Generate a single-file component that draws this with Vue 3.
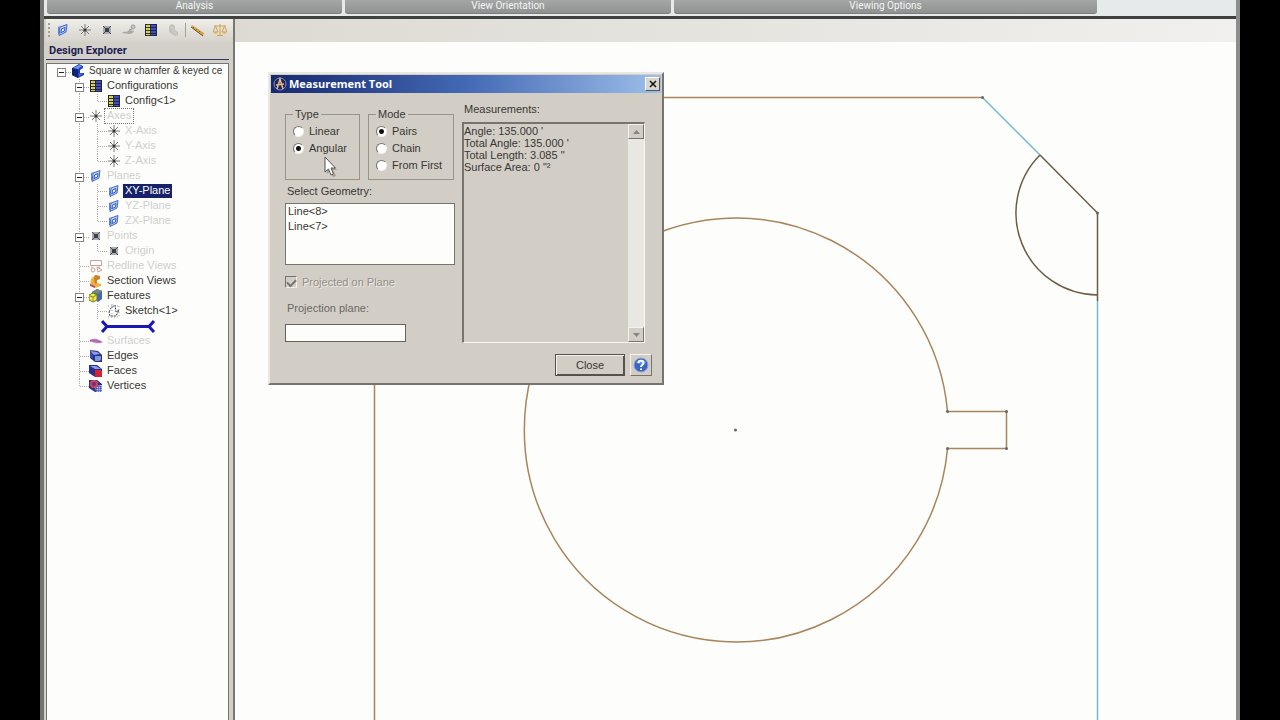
<script setup>
import { ref } from 'vue'

const ribbonGroups = [
  { name: 'Analysis', cls: 'analysis' },
  { name: 'View Orientation', cls: 'orientation' },
  { name: 'Viewing Options', cls: 'options' },
]

const tools = [
  { icon: 'plane', label: 'Insert plane' },
  { icon: 'axis', label: 'Insert axis' },
  { icon: 'point', label: 'Insert point' },
  { icon: 'surface-off', label: 'Surface' },
  { icon: 'config', label: 'Configurations' },
  { icon: 'part-off', label: 'Part' },
]
const measureTools = [
  { icon: 'ruler', label: 'Measurement tool' },
  { icon: 'scales', label: 'Physical properties' },
]

// guides: one entry per indent column; b = expander, v = line, t = tee, l = elbow
const rows = [
  { guides: ['root'], icon: 'part', text: 'Square w chamfer & keyed ce', state: 'document' },
  { guides: ['', 'b'], icon: 'config', text: 'Configurations' },
  { guides: ['', 'v', 'l'], icon: 'config', text: 'Config<1>' },
  { guides: ['', 'b'], icon: 'axis', text: 'Axes', state: 'off focus' },
  { guides: ['', 'v', 't'], icon: 'axis', text: 'X-Axis', state: 'off' },
  { guides: ['', 'v', 't'], icon: 'axis', text: 'Y-Axis', state: 'off' },
  { guides: ['', 'v', 'l'], icon: 'axis', text: 'Z-Axis', state: 'off' },
  { guides: ['', 'b'], icon: 'plane', text: 'Planes', state: 'off' },
  { guides: ['', 'v', 't'], icon: 'plane', text: 'XY-Plane', state: 'selected' },
  { guides: ['', 'v', 't'], icon: 'plane', text: 'YZ-Plane', state: 'off' },
  { guides: ['', 'v', 'l'], icon: 'plane', text: 'ZX-Plane', state: 'off' },
  { guides: ['', 'b'], icon: 'point', text: 'Points', state: 'off' },
  { guides: ['', 'v', 'l'], icon: 'point', text: 'Origin', state: 'off' },
  { guides: ['', 't'], icon: 'redline', text: 'Redline Views', state: 'off' },
  { guides: ['', 't'], icon: 'section', text: 'Section Views' },
  { guides: ['', 'b'], icon: 'features', text: 'Features' },
  { guides: ['', 'v', 't'], icon: 'sketch', text: 'Sketch<1>' },
  { guides: ['', 'v'], bar: true },
  { guides: ['', 't'], icon: 'surface', text: 'Surfaces', state: 'off' },
  { guides: ['', 't'], icon: 'edges', text: 'Edges' },
  { guides: ['', 't'], icon: 'faces', text: 'Faces' },
  { guides: ['', 'l'], icon: 'vertices', text: 'Vertices' },
]

const guidePaths = {
  '': '',
  v: 'M8.5 0V15',
  t: 'M8.5 0V15M9 7.5H18',
  l: 'M8.5 0V8M9 7.5H18',
  b: 'M8.5 0V15M9 8.5H18',
  root: 'M9 8.5H18',
}

const types = ['Linear', 'Angular']
const modes = ['Pairs', 'Chain', 'From First']
const type = ref('Angular')
const mode = ref('Pairs')
const projected = ref(true)
const plane = ref('')
const geometry = ['Line<8>', 'Line<7>']
const results = 'Angle: 135.000 \'\nTotal Angle: 135.000 \'\nTotal Length: 3.085 "\nSurface Area: 0 "²'
</script>

<template>
  <div class="stage">
    <svg class="symbols" aria-hidden="true">
      <symbol id="plane" viewBox="0 0 14 14">
        <path d="M4 4 11 1.500 10 9 3 12.500Z" fill="#b9d2f8" stroke="#4266c8" />
        <path d="M5.500 6 9 4.500 8.500 8 5 9.500Z" fill="#e4eefc" stroke="#3158bd" />
        <path d="M2.500 4V11L5 9.500M2.500 4H4" stroke="#5f83d8" fill="none" />
      </symbol>
      <symbol id="axis" viewBox="0 0 14 14">
        <path d="M1 7H13M7 1V13M3 3 11 11M11 3 3 11" stroke="#7c7c7c" fill="none" />
        <circle cx="7" cy="7" r="1.500" fill="#333" />
      </symbol>
      <symbol id="point" viewBox="0 0 14 14">
        <rect x="3" y="3" width="8" height="8" fill="#a9abb2" />
        <path d="M3 3 11 11M11 3 3 11" stroke="#4c4c54" stroke-width="1" />
        <rect x="5" y="5" width="4" height="4" fill="#3d3d46" />
      </symbol>
      <symbol id="surface-off" viewBox="0 0 14 14">
        <path d="M0 10C3 7 4 11 7 7L12 8C10 13 4 10 0 10Z" fill="#aaa9a3" />
        <circle cx="11" cy="4" r="2" fill="#ccc" stroke="#999" />
        <path d="M7 7 10 6" stroke="#999" />
      </symbol>
      <symbol id="part-off" viewBox="0 0 14 14">
        <path d="M3 3 6 1 9 3V7L12 9V12L9 13 3 9Z" fill="#c2c1bc" />
        <path d="M4 4 7 5V9M8 9 11 11" stroke="#d6d5d0" fill="none" />
      </symbol>
      <symbol id="config" viewBox="0 0 14 14">
        <rect x="1" y="1" width="12" height="12" fill="#24243c" />
        <path d="M2 2H6V4H2ZM2 5H6V7H2ZM2 8H6V10H2ZM2 11H6V12H2Z" fill="#e6e34a" />
        <path d="M7 2H12V4H7ZM7 5H12V7H7ZM7 8H12V10H7ZM7 11H12V12H7Z" fill="#3d50c8" />
        <path d="M4 1V13" stroke="#8a8838" stroke-width="0.500" />
      </symbol>
      <symbol id="ruler" viewBox="0 0 14 14">
        <path d="M1 2 13 10 12 13 0 4Z" fill="#d5a545" />
        <path d="M0 4 12 13" stroke="#6d5525" />
        <path d="M3 4 2 5M6 6 5 7M9 8 8 9" stroke="#83642a" />
      </symbol>
      <symbol id="scales" viewBox="0 0 14 14">
        <path d="M7 1V12M4 12.500H10M1 3H13M2.500 3 0 9H5ZM11.500 3 9 9H14Z" fill="none" stroke="#cfa24c" />
        <path d="M0 9H5L3 11H2ZM9 9H14L12 11H11Z" fill="#dfb65f" />
      </symbol>
      <symbol id="part" viewBox="0 0 14 14">
        <path d="M1 4 8 0 12 2V4L9 6V9L13 9V11L7 14 1 11Z" fill="#1f3fbf" />
        <path d="M1 4 7 6V14L1 11Z" fill="#12246f" />
        <path d="M2 4 8 1 11 2 7 5Z" fill="#6a98f2" />
        <path d="M8 10 12 9 8 12Z" fill="#5687ea" />
      </symbol>
      <symbol id="redline" viewBox="0 0 14 14">
        <path d="M1.500 1.500H12.500V6.500H1.500ZM3 7V9M10 7V9" fill="#fff" stroke="#c9a09c" />
        <circle cx="4" cy="11" r="2" fill="none" stroke="#c9a09c" />
        <path d="M8 8 13 11 9 13Z" fill="none" stroke="#c9a09c" />
      </symbol>
      <symbol id="section" viewBox="0 0 14 14">
        <path d="M2 5 6 1 11 2V5L8 6V9L12 10V12L6 14 1 11Z" fill="#efb33c" />
        <path d="M6 1 11 2V5L8 6V9L6 10 5 5Z" fill="#c88430" />
        <path d="M1 10 6 12V14L1 12Z" fill="#b6498a" />
      </symbol>
      <symbol id="features" viewBox="0 0 14 14">
        <path d="M3 3 8 0 13 2V10L9 13 3 9Z" fill="#4b65b4" />
        <path d="M3 3 8 0 13 2 9 5Z" fill="#6d8c70" />
        <path d="M0 6 4 4 8 6V11L4 13 0 11Z" fill="#eeea46" stroke="#77752c" />
        <path d="M1 7 4 8 8 6M4 8V12" stroke="#8d8a34" fill="none" />
      </symbol>
      <symbol id="sketch" viewBox="0 0 14 14">
        <path d="M2 8 4 4 8 1 9 8 12 6 9 12 3 12Z" fill="none" stroke="#33334c" stroke-dasharray="2 1" />
        <path d="M1 2H13M1 13H13M5 0V14M12 2V13" stroke="#9999a8" stroke-dasharray="1 2" />
      </symbol>
      <symbol id="surface" viewBox="0 0 14 14">
        <path d="M0 7C3 4 6 5 8 5L14 8C11 10 8 9 6 9Z" fill="#c583c6" />
        <path d="M1 7C5 6 8 7 12 8" stroke="#9b5ba4" fill="none" />
      </symbol>
      <symbol id="edges" viewBox="0 0 14 14">
        <path d="M1 1 9 2 13 6V13L6 13 1 9Z" fill="#2a2f86" />
        <path d="M1 2 8 3 11 5 5 6Z" fill="#8c9fe6" />
        <path d="M6 7H12V11L10 12H6Z" fill="#8294dc" />
        <path d="M1 3 4 6V10L1 8Z" fill="#3c4cae" />
      </symbol>
      <symbol id="faces" viewBox="0 0 14 14">
        <path d="M0 1 8 1 13 5V13L6 13 0 9Z" fill="#2a2f86" />
        <path d="M1 2 7 2 12 5H6Z" fill="#8c9fe6" />
        <path d="M6 6H13V13H6Z" fill="#da1f34" />
      </symbol>
      <symbol id="vertices" viewBox="0 0 14 14">
        <path d="M0 1 8 1 13 5V13L6 13 0 9Z" fill="#2e3288" />
        <path d="M6 7 13 6V13H7Z" fill="#b7c0ec" />
        <path d="M7 8H13M7 10H13M7 12H13M8 7V13M10 7V13M12 7V13" stroke="#343b96" stroke-dasharray="1 1" />
        <circle cx="5" cy="5" r="4" fill="#cc4663" />
        <circle cx="5" cy="5" r="2" fill="#722f78" />
      </symbol>
    </svg>

    <div class="window">
      <header class="ribbon">
        <div v-for="g in ribbonGroups" :key="g.name" class="group" :class="g.cls">{{ g.name }}</div>
      </header>

      <div class="work">
        <aside class="explorer">
          <div class="toolbar">
            <span class="grip"></span>
            <button v-for="t in tools" :key="t.label" class="tool" :aria-label="t.label">
              <svg><use :href="'#' + t.icon" /></svg>
            </button>
            <span class="divider"></span>
            <button v-for="t in measureTools" :key="t.label" class="tool" :aria-label="t.label">
              <svg><use :href="'#' + t.icon" /></svg>
            </button>
          </div>
          <h2>Design Explorer</h2>
          <ul class="tree">
            <li v-for="(r, i) in rows" :key="i" class="row">
              <svg v-for="(g, k) in r.guides" :key="k" class="guide">
                <path :d="guidePaths[g]" class="dots" />
                <g v-if="g === 'b' || g === 'root'">
                  <rect x="4.500" y="4.500" width="8" height="8" class="box" />
                  <path d="M6 8.500H11" class="minus" />
                </g>
              </svg>
              <svg v-if="r.bar" class="rollback">
                <path d="M1 2 6 7.500 1 13M6 7.500H48M53 2 48 7.500 53 13" />
              </svg>
              <template v-else>
                <svg class="node"><use :href="'#' + r.icon" /></svg>
                <span class="label" :class="r.state">{{ r.text }}</span>
              </template>
            </li>
          </ul>
        </aside>

        <main class="view">
          <div class="strip"></div>
          <div class="canvas">
            <svg class="drawing">
              <g transform="translate(-235 -42)">
                <g class="edge">
                  <path d="M374.500 1600V97.500H982" />
                  <path d="M947.500 411.500A212 212 0 1 0 947.500 448.500" />
                  <path d="M947.500 411.500H1006.500V448.500H947.500" />
                </g>
                <path class="picked" d="M982.500 97.500 1040 155M1097.500 301V1600" />
                <path class="angle" d="M1040 155 1097.500 213V301M1040 155A82 82 0 0 0 1097.500 295" />
                <g class="vertex">
                  <circle cx="735.500" cy="430" r="1.500" />
                  <circle cx="982.500" cy="97.500" r="1.500" />
                  <circle cx="1097.500" cy="213" r="1.500" />
                  <circle cx="947.500" cy="411.500" r="1.500" />
                  <circle cx="947.500" cy="448.500" r="1.500" />
                  <circle cx="1006.500" cy="411.500" r="1.500" />
                  <circle cx="1006.500" cy="448.500" r="1.500" />
                </g>
              </g>
            </svg>

            <section class="dialog" role="dialog" aria-labelledby="dlg-title">
              <div class="titlebar">
                <svg class="logo" viewBox="0 0 14 14">
                  <circle cx="7" cy="7" r="6" fill="#1d2559" stroke="#8690bd" />
                  <path d="M4 12 7 2 10 12M3 8 11 7" stroke="#e6b98a" fill="none" stroke-width="1.500" />
                </svg>
                <h1 id="dlg-title">Measurement Tool</h1>
                <button class="x" aria-label="Close window">
                  <svg viewBox="0 0 8 8"><path d="M1 1 7 7M7 1 1 7" /></svg>
                </button>
              </div>
              <div class="body">
                <div class="left">
                  <div class="groups">
                    <fieldset class="type">
                      <legend>Type</legend>
                      <label v-for="t in types" :key="t"><input v-model="type" type="radio" name="type" :value="t" />{{ t }}</label>
                    </fieldset>
                    <fieldset class="mode">
                      <legend>Mode</legend>
                      <label v-for="m in modes" :key="m"><input v-model="mode" type="radio" name="mode" :value="m" />{{ m }}</label>
                    </fieldset>
                  </div>
                  <span id="geo" class="caption">Select Geometry:</span>
                  <ul class="geometry" role="listbox" aria-labelledby="geo">
                    <li v-for="g in geometry" :key="g" role="option">{{ g }}</li>
                  </ul>
                  <label class="projected">
                    <input v-model="projected" type="checkbox" disabled />Projected on Plane
                  </label>
                  <label for="plane-name" class="caption dim">Projection plane:</label>
                  <input id="plane-name" v-model="plane" type="text" class="plane" />
                </div>
                <div class="right">
                  <label for="results" class="caption">Measurements:</label>
                  <div class="results">
                    <textarea id="results" readonly :value="results"></textarea>
                    <div class="scroll">
                      <button aria-label="Scroll up"><svg viewBox="0 0 7 4"><path d="M0 4 3.500 0 7 4Z" /></svg></button>
                      <button aria-label="Scroll down"><svg viewBox="0 0 7 4"><path d="M0 0H7L3.500 4Z" /></svg></button>
                    </div>
                  </div>
                </div>
              </div>
              <div class="footer">
                <button class="close">Close</button>
                <button class="help" aria-label="Help">
                  <svg viewBox="0 0 16 16">
                    <circle cx="8" cy="8" r="7" fill="#3a66bd" stroke="#8ba6d8" />
                    <path d="M3 6A5.500 5.500 0 0 1 13 6Q8 8 3 6Z" fill="#6d95dc" />
                    <path d="M5.500 6C5.500 3 10.500 3 10.500 6 10.500 8 8 8 8 10M8 11.500V13" fill="none" stroke="#fff" stroke-width="2" />
                  </svg>
                </button>
              </div>
              <svg class="pointer" viewBox="0 0 14 22">
                <path d="M3 3V18L6 15 9 21 12 20 9 14H13Z" fill="#77736b" opacity="0.500" />
                <path d="M1 1V16L4.500 13 7 19 9.500 18 7 12H11.500Z" fill="#fff" stroke="#555" />
              </svg>
            </section>
          </div>
        </main>
      </div>
    </div>
  </div>
</template>

<style>
body {
  background: #000;
}
</style>

<style scoped>
* {
  box-sizing: border-box;
}
.stage {
  display: flex;
  height: 100vh;
  padding: 0 40px;
  background: #000;
  overflow: hidden;
  font: 11px/13px "Liberation Sans", sans-serif;
  color: #383735;
}
.symbols {
  position: absolute;
  width: 0;
  height: 0;
}
.window {
  flex: 1;
  min-width: 0;
  display: flex;
  flex-direction: column;
  border-left: 4px solid #73736f;
  border-right: 4px solid #8d8d8d;
}
ul, h1, h2 {
  margin: 0;
  padding: 0;
  list-style: none;
}
button {
  font: inherit;
  color: inherit;
  padding: 0;
  border: 0;
  background: none;
  display: flex;
  align-items: center;
  justify-content: center;
}

/* ribbon */
.ribbon {
  display: flex;
  gap: 3px;
  height: 19px;
  padding: 0 2px 2px 3px;
  background: #e6eaea;
  border-bottom: 3px solid #3f4040;
}
.group {
  height: 14px;
  border-radius: 0 0 3px 3px;
  background: linear-gradient(#a4a7a6, #8f9291);
  border-bottom: 1px solid #7b7e7d;
  color: #f4f6f6;
  font: 10px/12px Roboto, sans-serif;
  text-align: center;
}
.analysis { width: 295px; }
.orientation { width: 326px; }
.options { width: 423px; }

.work {
  flex: 1;
  min-height: 0;
  display: flex;
}

/* explorer */
.explorer {
  width: 191px;
  display: flex;
  flex-direction: column;
  background: #d3d0c9;
  padding: 0 4px 0 2px;
  border-right: 2px solid #777773;
}
.toolbar {
  display: flex;
  align-items: center;
  height: 23px;
  margin: 0 -4px 0 0;
  padding: 0 0 2px 2px;
  background: linear-gradient(#efeeea, #d6d3cb);
}
.grip {
  width: 4px;
  height: 14px;
  border-left: 2px dotted #a29f97;
}
.tool {
  width: 22px;
  height: 20px;
}
.tool svg {
  width: 14px;
  height: 14px;
}
.divider {
  width: 1px;
  height: 14px;
  margin: 0 1px;
  background: #a4a19a;
}
h2 {
  height: 18px;
  padding-left: 3px;
  font: bold 11px/17px Roboto, sans-serif;
  color: #1d1d52;
  border-bottom: 1px solid #35356a;
}
.tree {
  flex: 1;
  margin-top: 3px;
  padding-left: 6px;
  background: #fdfefb;
  border: 1px solid #77756f;
  border-bottom: 0;
  overflow: hidden;
}
.row {
  display: flex;
  align-items: center;
  height: 15px;
  white-space: nowrap;
}
.guide {
  flex: none;
  width: 18px;
  height: 15px;
}
.dots {
  fill: none;
  stroke: #aaa;
  stroke-dasharray: 1 1;
}
.box {
  fill: #fff;
  stroke: #858585;
}
.minus {
  stroke: #222;
}
.node {
  flex: none;
  width: 14px;
  height: 14px;
  margin: 0 2px 1px 0;
}
.label {
  height: 14px;
  line-height: 13px;
  margin-bottom: 2px;
  padding: 0 2px;
}
.document {
  font-size: 10px;
}
.off {
  color: #cfcfcf;
}
.focus {
  outline: 1px dotted #777;
}
.selected {
  background: #16216a;
  color: #fff;
}
.rollback {
  width: 55px;
  height: 15px;
  margin-left: 12px;
  fill: none;
  stroke: #1a18b4;
  stroke-width: 3;
}

/* drawing area */
.view {
  flex: 1;
  min-width: 0;
  display: flex;
  flex-direction: column;
}
.strip {
  height: 23px;
  background: linear-gradient(90deg, #dcdad2, #e6e4df 50%, #f2f0ee);
}
.canvas {
  position: relative;
  flex: 1;
  min-height: 0;
  background: #fdfefb;
}
.drawing {
  display: block;
  width: 100%;
  height: 100%;
}
.edge {
  fill: none;
  stroke: #a9845c;
  stroke-width: 1.500;
}
.picked {
  fill: none;
  stroke: #74b8d6;
  stroke-width: 1.500;
}
.angle {
  fill: none;
  stroke: #6b5b45;
  stroke-width: 1.500;
}
.vertex {
  fill: #5f6a68;
}

/* dialog */
.dialog {
  position: absolute;
  left: 33px;
  top: 30px;
  width: 396px;
  padding: 1px 1px 7px;
  background: #d2cec5;
  border: 2px solid;
  border-color: #e9e7e1 #77746f #77746f #e9e7e1;
}
.titlebar {
  display: flex;
  align-items: center;
  height: 18px;
  padding: 0 1px 0 2px;
  background: linear-gradient(90deg, #16296f, #4469b4 50%, #9dbfea);
}
.logo {
  width: 14px;
  height: 14px;
}
h1 {
  flex: 1;
  padding-left: 2px;
  font: bold 11px/16px "Open Sans", sans-serif;
  color: #fff;
}
.x {
  width: 15px;
  height: 14px;
  background: #d8d5cd;
  border: 1px solid;
  border-color: #fff #55534e #55534e #fff;
}
.x svg {
  width: 8px;
  height: 8px;
  stroke: #111;
  stroke-width: 1.500;
}
.body {
  display: grid;
  grid-template-columns: 170px 183px;
  gap: 7px;
  padding: 10px 0 0 14px;
}
.left, .right {
  display: flex;
  flex-direction: column;
}
.left {
  padding-top: 5px;
}
.groups {
  display: flex;
  gap: 8px;
}
fieldset {
  min-width: 0;
  height: 72px;
  margin: 0;
  padding: 2px 0 0 7px;
  border: 1px solid #98948c;
}
.type { width: 75px; }
.mode { width: 86px; }
legend {
  padding: 0 2px;
}
fieldset label {
  display: flex;
  align-items: center;
  gap: 5px;
  height: 17px;
  white-space: nowrap;
}
input[type="radio"] {
  appearance: none;
  width: 11px;
  height: 11px;
  margin: 0;
  border-radius: 50%;
  border: 1px solid;
  border-color: #77746d #f2f0ec #f2f0ec #77746d;
  background: #fff;
}
input[type="radio"]:checked {
  background: radial-gradient(circle, #111 2px, #fff 3px);
}
.caption {
  padding-left: 2px;
}
.left .caption {
  margin-top: 5px;
}
.left .dim {
  margin-top: 13px;
  color: #6b6963;
}
.geometry {
  height: 62px;
  margin-top: 5px;
  padding: 0 2px;
  background: #fdfefb;
  border: 1px solid #77746d;
  line-height: 15px;
}
.projected {
  display: flex;
  align-items: center;
  gap: 5px;
  height: 14px;
  margin-top: 10px;
  color: #928f87;
  text-shadow: 1px 1px #eeece7;
}
input[type="checkbox"] {
  appearance: none;
  width: 12px;
  height: 12px;
  margin: 0;
  border: 1px solid;
  border-color: #77746d #f2f0ec #f2f0ec #77746d;
  display: flex;
  align-items: center;
  justify-content: center;
}
input[type="checkbox"]:checked::after {
  content: "";
  width: 7px;
  height: 4px;
  border: solid #77746d;
  border-width: 0 0 2px 2px;
  transform: rotate(-45deg);
}
.plane {
  width: 121px;
  height: 18px;
  margin-top: 9px;
  padding: 0 2px;
  font: inherit;
  background: #fdfefb;
  border: 1px solid #66635d;
}
.results {
  display: flex;
  height: 221px;
  margin-top: 6px;
  border: solid;
  border-width: 2px 1px 1px 2px;
  border-color: #77746d #f8f7f4 #f8f7f4 #77746d;
}
textarea {
  flex: 1;
  min-width: 0;
  margin: 0;
  padding: 1px 0;
  border: 0;
  resize: none;
  overflow: hidden;
  background: none;
  font: inherit;
  line-height: 12px;
  color: inherit;
}
.scroll {
  width: 16px;
  display: flex;
  flex-direction: column;
  justify-content: space-between;
  background: #e9e7e2;
}
.scroll button,
.help {
  background: #d2cec5;
  border: 1px solid;
  border-color: #f4f3ef #77746d #77746d #f4f3ef;
}
.scroll button {
  height: 15px;
}
.scroll svg {
  width: 7px;
  height: 4px;
  fill: #88857d;
}
.footer {
  display: flex;
  justify-content: flex-end;
  gap: 5px;
  margin-top: 11px;
  padding-right: 9px;
}
.close {
  width: 70px;
  height: 22px;
  border: 1px solid #55524d;
  box-shadow: inset 1px 1px #f5f3ee, inset -1px -1px #55524d;
}
.help {
  width: 22px;
  height: 22px;
}
.help svg {
  width: 16px;
  height: 16px;
}
.pointer {
  position: absolute;
  left: 54px;
  top: 82px;
  width: 14px;
  height: 22px;
}
</style>
